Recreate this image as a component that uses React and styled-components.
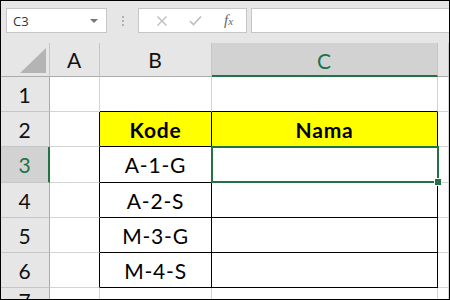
import React from 'react';
import styled, { createGlobalStyle } from 'styled-components';

const GlobalStyle = createGlobalStyle`
  html, body { margin: 0; padding: 0; background: #fff; }
  * { box-sizing: border-box; }
`;

const GRID = '#d4d4d4';
const HEAD_LINE = '#c6c6c6';
const GREEN = '#217346';

const Frame = styled.div`
  width: 450px;
  height: 300px;
  border: 1px solid #000;
  background: #e6e6e6;
  overflow: hidden;
  display: flex;
  flex-direction: column;
  font-family: Lato, 'Open Sans', sans-serif;
`;

const Toolbar = styled.div`
  height: 42px;
  flex: none;
  display: flex;
  align-items: flex-start;
  padding: 7px 0 0 5px;
  background: #e6e6e6;
`;

const NameBox = styled.div`
  width: 101px;
  height: 25px;
  background: #fff;
  border: 1px solid #c6c6c6;
  display: flex;
  align-items: center;
  justify-content: space-between;
  padding: 0 8px 0 6px;
  font-size: 13px;
  color: #333;
  font-family: 'Open Sans', sans-serif;
`;

const Caret = styled.span`
  width: 0;
  height: 0;
  border-left: 4px solid transparent;
  border-right: 4px solid transparent;
  border-top: 4px solid #777;
`;

const Grip = styled.div`
  width: 31px;
  height: 25px;
  display: flex;
  flex-direction: column;
  align-items: center;
  justify-content: center;
  gap: 2px;
  span {
    width: 2px;
    height: 2px;
    background: #b0b0b0;
  }
`;

const ButtonGroup = styled.div`
  width: 109px;
  height: 25px;
  background: #fff;
  border: 1px solid #c6c6c6;
  display: flex;
  align-items: center;
  justify-content: space-around;
  padding: 0 2px 0 6px;
  margin-right: 4px;
`;

const Fx = styled.span`
  font-family: 'Liberation Serif', serif;
  font-style: italic;
  font-size: 15px;
  color: #666;
  span { font-size: 11px; }
`;

const FormulaInput = styled.div`
  flex: 1;
  height: 25px;
  background: #fff;
  border: 1px solid #c6c6c6;
  border-right: none;
`;

const Sheet = styled.div`
  position: relative;
  flex: 1;
  display: grid;
  grid-template-columns: 49px 50px 112px 226px 1fr;
  grid-template-rows: 34px 35px 35px 36px 35px 35px 35px 1fr;
  background: #fff;
  font-size: 21px;
  letter-spacing: 0.8px;
`;

const Corner = styled.div`
  background: #e6e6e6;
  border-right: 1px solid ${HEAD_LINE};
  border-bottom: 1px solid #ababab;
  display: flex;
  align-items: flex-end;
  justify-content: flex-end;
  padding: 0 3px 3px 0;
`;

const ColHead = styled.div`
  background: ${(p) => (p.$active ? '#d2d2d2' : '#e6e6e6')};
  color: ${(p) => (p.$active ? GREEN : '#111')};
  border-right: 1px solid ${HEAD_LINE};
  border-bottom: ${(p) => (p.$active ? `2px solid ${GREEN}` : '1px solid #ababab')};
  display: flex;
  align-items: center;
  justify-content: center;
  padding-top: ${(p) => (p.$active ? '2px' : '0')};
`;

const RowHead = styled.div`
  background: ${(p) => (p.$active ? '#d2d2d2' : '#e6e6e6')};
  color: ${(p) => (p.$active ? GREEN : '#111')};
  border-right: ${(p) => (p.$active ? `2px solid ${GREEN}` : '1px solid #ababab')};
  border-bottom: 1px solid ${HEAD_LINE};
  display: flex;
  align-items: center;
  justify-content: center;
  padding-left: ${(p) => (p.$active ? '1px' : '0')};
`;

const Cell = styled.div`
  border-right: 1px solid ${(p) => (p.$rb ? '#000' : GRID)};
  border-bottom: 1px solid ${(p) => (p.$bb ? '#000' : GRID)};
  background: ${(p) => (p.$fill ? '#ffff00' : '#fff')};
  display: flex;
  align-items: center;
  justify-content: center;
  font-weight: ${(p) => (p.$bold ? 700 : 400)};
  color: #000;
`;

const Selection = styled.div`
  position: absolute;
  left: 210px;
  top: 103px;
  width: 228px;
  height: 37px;
  border: 2px solid ${GREEN};
  pointer-events: none;
`;

const Handle = styled.div`
  position: absolute;
  right: -4px;
  bottom: -4px;
  width: 6px;
  height: 6px;
  background: ${GREEN};
  border: 1px solid #fff;
  box-sizing: content-box;
  margin: -1px;
`;

const rows = [
  { n: 1, b: '', c: '' },
  { n: 2, b: 'Kode', c: 'Nama', head: true },
  { n: 3, b: 'A-1-G', c: '', active: true },
  { n: 4, b: 'A-2-S', c: '' },
  { n: 5, b: 'M-3-G', c: '' },
  { n: 6, b: 'M-4-S', c: '' },
  { n: 7, b: '', c: '' },
];

export default function App() {
  return (
    <>
      <GlobalStyle />
      <Frame>
        <Toolbar>
          <NameBox>
            C3
            <Caret />
          </NameBox>
          <Grip>
            <span />
            <span />
            <span />
          </Grip>
          <ButtonGroup>
            <svg width="12" height="12" viewBox="0 0 12 12">
              <path d="M1.5 1.5l9 9M10.5 1.5l-9 9" stroke="#bdbdbd" strokeWidth="1.4" fill="none" />
            </svg>
            <svg width="13" height="11" viewBox="0 0 13 11">
              <path d="M1 6l3.5 3.5L12 1.5" stroke="#bdbdbd" strokeWidth="1.6" fill="none" />
            </svg>
            <Fx>
              f<span>x</span>
            </Fx>
          </ButtonGroup>
          <FormulaInput />
        </Toolbar>
        <Sheet>
          <Corner>
            <svg width="26" height="25" viewBox="0 0 26 25">
              <path d="M26 0V25H0Z" fill="#b4b4b4" />
            </svg>
          </Corner>
          <ColHead>A</ColHead>
          <ColHead>B</ColHead>
          <ColHead $active>C</ColHead>
          <ColHead />
          {rows.map((r) => {
            const inTable = r.n >= 2 && r.n <= 6;
            const aboveTable = r.n === 1;
            return (
              <React.Fragment key={r.n}>
                <RowHead $active={r.active}>{r.n}</RowHead>
                <Cell $rb={inTable} />
                <Cell $rb={inTable} $bb={inTable || aboveTable} $fill={r.head} $bold={r.head}>
                  {r.b}
                </Cell>
                <Cell $rb={inTable} $bb={inTable || aboveTable} $fill={r.head} $bold={r.head}>
                  {r.c}
                </Cell>
                <Cell />
              </React.Fragment>
            );
          })}
          <Selection>
            <Handle />
          </Selection>
        </Sheet>
      </Frame>
    </>
  );
}
